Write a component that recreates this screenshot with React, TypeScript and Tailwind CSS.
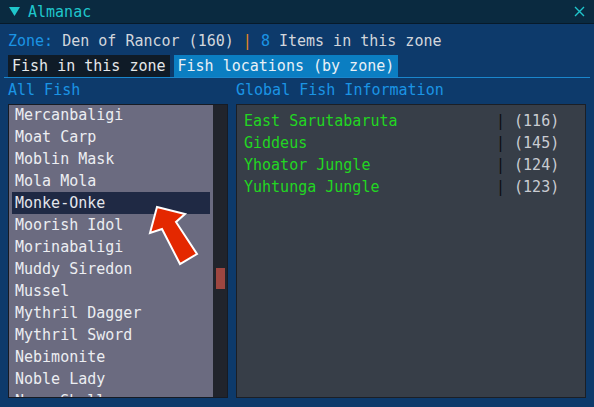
const fish = [
  'Mercanbaligi',
  'Moat Carp',
  'Moblin Mask',
  'Mola Mola',
  'Monke-Onke',
  'Moorish Idol',
  'Morinabaligi',
  'Muddy Siredon',
  'Mussel',
  'Mythril Dagger',
  'Mythril Sword',
  'Nebimonite',
  'Noble Lady',
  'Norg Shell',
]

const zones = [
  { name: 'East Sarutabaruta', lvl: 116 },
  { name: 'Giddeus', lvl: 145 },
  { name: 'Yhoator Jungle', lvl: 124 },
  { name: 'Yuhtunga Jungle', lvl: 123 },
]

// Almanac window: fish list on the left, where the selected fish can be caught on the right.
export default function App() {
  return (
    <div
      className="relative flex h-[407px] w-[594px] flex-col overflow-hidden bg-[#0d3a6b] text-[15px] leading-[18px]"
      style={{ fontFamily: '"DejaVu Sans Mono", "Liberation Mono", monospace' }}
    >
      <div className="flex h-[24px] shrink-0 items-center justify-between border-b border-[#071a2a] bg-[#0a2a40] pl-[9px] pr-[9px]">
        <div className="flex items-center gap-[8px] text-[#1fc6cc]">
          <svg width="11" height="9" viewBox="0 0 11 9">
            <polygon points="0,0 11,0 5.5,9" fill="#1fc6cc" />
          </svg>
          <span>Almanac</span>
        </div>
        <svg width="11" height="11" viewBox="0 0 11 11">
          <path d="M1 1 L10 10 M10 1 L1 10" stroke="#1fc6cc" strokeWidth="1.4" />
        </svg>
      </div>

      <div className="flex flex-1 flex-col px-[8px]">
        <div className="mt-[8px] h-[18px] whitespace-pre text-[#d2d6dc]">
          <span className="text-[#1b94e4]">Zone:</span> Den of Rancor (160){' '}
          <span className="text-[#e8861e]">|</span> <span className="text-[#1b94e4]">8</span> Items in this zone
        </div>

        <div className="mt-[5px] flex h-[22px] gap-[4px]">
          <div className="flex items-center bg-[#0f1b27] px-[4px] text-[#e6e8ea]">Fish in this zone</div>
          <div className="flex items-center bg-[#0b7ec2] px-[4px] text-[#e8f0f6]">Fish locations (by zone)</div>
        </div>
        <div className="-mx-[4px] h-px bg-[#1a86cc]" />

        <div className="mt-[3px] flex h-[18px] gap-[8px] text-[#1b94e4]">
          <div className="w-[220px]">All Fish</div>
          <div>Global Fish Information</div>
        </div>

        <div className="mt-[5px] flex h-[294px] gap-[8px]">
          <div className="flex w-[220px] overflow-hidden border border-[#161b24] bg-[#6b6b80]">
            <div className="-mt-px flex-1 overflow-hidden pl-[3px] pr-[3px]">
              {fish.map((f) => (
                <div
                  key={f}
                  className={`flex h-[22px] items-center px-[3px] ${
                    f === 'Monke-Onke' ? 'bg-[#1f2944] text-[#e4e6ec]' : 'text-[#eceef2]'
                  }`}
                >
                  {f}
                </div>
              ))}
            </div>
            <div className="relative w-[14px] bg-[#21242c]">
              <div className="absolute left-[3px] top-[163px] h-[21px] w-[9px] bg-[#9e4640]" />
            </div>
          </div>

          <div className="flex-1 border border-[#1b1f26] bg-[#373e48] px-[7px] pt-[5px]">
            {zones.map((z) => (
              <div key={z.name} className="flex h-[22px] items-center whitespace-pre">
                <span className="inline-block w-[252px] text-[#22d622]">{z.name}</span>
                <span className="text-[#0c0e12]">|</span>
                <span className="text-[#c9ccd2]"> ({z.lvl})</span>
              </div>
            ))}
          </div>
        </div>
      </div>

      <svg className="absolute left-0 top-0" width="594" height="407" viewBox="0 0 594 407">
        <polygon
          points="157,207 185,214 176,222 197,254 180,264 162,229 150,233"
          fill="#e42800"
          stroke="#ffffff"
          strokeWidth="2"
          strokeLinejoin="miter"
        />
      </svg>
    </div>
  )
}
